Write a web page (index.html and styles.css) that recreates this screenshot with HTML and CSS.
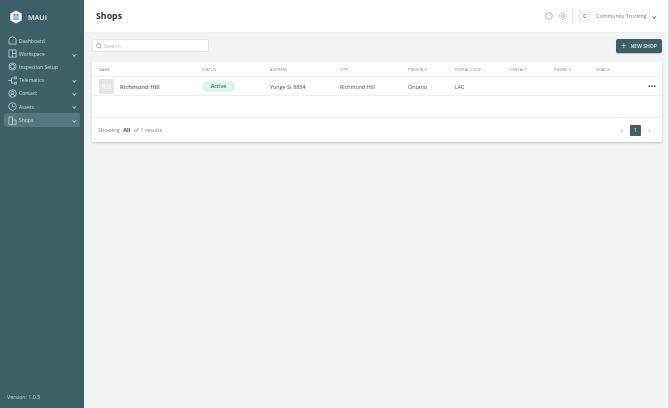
FILE: index.html
```html
<!DOCTYPE html>
<html lang="en">
<head>
<meta charset="utf-8">
<title>Shops</title>
<link rel="stylesheet" href="styles.css">
</head>
<body>
<div class="app">
  <aside class="sidebar">
    <div class="brand">
      <svg class="logo" viewBox="0 0 16 16"><path d="M8 .5 14.500 4v8L8 15.500 1.500 12V4z" fill="#f2f4f4"/><path d="M5 4.500h6v7H5z" fill="#8b9ea3"/><path d="M8 4.500v7M5 8h6" stroke="#f2f4f4" stroke-width=".7"/></svg>
      <span>MAUI</span>
    </div>
    <nav class="nav">
      <a class="nav-item"><svg viewBox="0 0 10 10"><path d="M1 9V4.500a4 3.500 0 0 1 8 0V9z"/></svg><span>Dashboard</span></a>
      <a class="nav-item"><svg viewBox="0 0 10 10"><path d="M1 1h8v8H1zM5 1v8M5 5h4"/></svg><span>Workspace</span><i class="chev"></i></a>
      <a class="nav-item"><svg viewBox="0 0 10 10"><circle cx="5" cy="5" r="4"/><circle cx="5" cy="5" r="2.400"/></svg><span>Inspection Setup</span></a>
      <a class="nav-item"><svg viewBox="0 0 10 10"><path d="M0 5h4M4 2v6M4 2h2M4 8h2M7 1h3v2H7zM7 7h3v2H7z"/></svg><span>Telematics</span><i class="chev"></i></a>
      <a class="nav-item"><svg viewBox="0 0 10 10"><circle cx="5" cy="5" r="4.200"/><circle cx="5" cy="4" r="1.500"/><path d="M2.500 8a2.500 2 0 0 1 5 0"/></svg><span>Contact</span><i class="chev"></i></a>
      <a class="nav-item"><svg viewBox="0 0 10 10"><circle cx="5" cy="5" r="4.200"/><path d="M5 2.500V5h2.200"/></svg><span>Assets</span><i class="chev"></i></a>
      <a class="nav-item active"><svg viewBox="0 0 10 10"><path d="M1 9.500V1h4v8.500M5 4.500h4v5H1"/></svg><span>Shops</span><i class="chev"></i></a>
    </nav>
    <div class="version">Version: 1.0.5</div>
  </aside>
  <div class="main">
    <header class="topbar">
      <h1>Shops</h1>
      <div class="top-actions">
        <svg class="top-icon" viewBox="0 0 10 10"><circle cx="5" cy="5" r="4.200"/><path d="M5 2.500V5.500"/></svg>
        <svg class="top-icon" viewBox="0 0 10 10"><circle cx="5" cy="5" r="4.200" stroke-dasharray="1.500 .6"/><circle cx="5" cy="5" r="1.800"/></svg>
        <div class="account">
          <span class="avatar">C</span>
          <span class="company">Community Trucking</span>
          <i class="chev dark"></i>
        </div>
      </div>
    </header>
    <div class="content">
      <div class="toolbar">
        <label class="search">
          <svg viewBox="0 0 10 10"><circle cx="4.600" cy="4.600" r="3.600"/><path d="M7.200 7.200 9 9"/></svg>
          <span>Search</span>
        </label>
        <button class="new-btn"><span class="plus">+</span>NEW SHOP</button>
      </div>
      <section class="card">
        <div class="row head">
          <span>NAME</span><span>STATUS</span><span>ADDRESS</span><span>CITY</span><span>PROVINCE</span><span>POSTAL CODE</span><span>CONTACT</span><span>PHONE #</span><span>EMAILS</span><span></span>
        </div>
        <div class="row body">
          <span class="name"><span class="thumb">RH</span><span>Richmond Hill</span></span>
          <span><span class="badge">Active</span></span>
          <span>Yonge St 8884</span>
          <span>Richmond Hill</span>
          <span>Ontario</span>
          <span>L4C</span>
          <span></span><span></span><span></span>
          <span class="dots">•••</span>
        </div>
        <div class="spacer"></div>
        <footer class="card-foot">
          <span class="showing">Showing <b>All</b> of 1 results</span>
          <div class="pager">
            <span class="arrow">‹</span>
            <span class="page">1</span>
            <span class="arrow">›</span>
          </div>
        </footer>
      </section>
    </div>
  </div>
</div>
</body>
</html>
```
FILE: styles.css
```css
* { box-sizing: border-box; }
html, body { margin: 0; height: 100%; overflow: hidden; }
body { font-family: "Open Sans", "Liberation Sans", sans-serif; color: #444c4f; }
.app { display: flex; height: 408px; width: 670px; filter: blur(.3px); }

.sidebar { width: 84px; flex: none; background: #3d6068; color: #d5dfe1; display: flex; flex-direction: column; padding: 10px 4px 7px; }
.brand { display: flex; align-items: center; gap: 5px; padding-left: 5px; height: 14px; font-size: 7.200px; font-weight: 600; color: #eef2f3; }
.logo { width: 14px; height: 14px; }
.nav { display: flex; flex-direction: column; margin-top: 10px; }
.nav-item { display: flex; align-items: center; height: 13.200px; padding: 0 4px; font-size: 5px; border-radius: 2px; gap: 2px; }
.nav-item svg { width: 9px; height: 9px; flex: none; fill: none; stroke: #d5dfe1; stroke-width: .8; }
.nav-item span { flex: 1; }
.nav-item.active { background: #537680; margin-top: .3px; }
.chev { width: 2.500px; height: 2.500px; border-right: 1px solid #b8c8cb; border-bottom: 1px solid #b8c8cb; transform: rotate(45deg); margin-right: 1px; flex: none; }
.chev.dark { border-color: #777; }
.version { margin-top: auto; padding-left: 3px; font-size: 5.300px; color: #c4d2d5; line-height: 8px; }

.main { flex: 1; display: flex; flex-direction: column; background: #f1f3f4; border-right: 2px solid #d8dcdd; min-width: 0; }
.topbar { height: 33px; flex: none; background: #fff; display: flex; justify-content: space-between; align-items: center; padding: 0 12px; border-bottom: 1px solid #eceeef; }
h1 { margin: 0; font-size: 8.800px; font-weight: 700; color: #2c2f30; }
.top-actions { display: flex; align-items: center; }
.top-icon { width: 8px; height: 8px; margin-right: 6px; fill: none; stroke: #777f82; stroke-width: .7; }
.account { display: flex; align-items: center; height: 16px; border-left: 1px solid #e6e9ea; padding-left: 5px; margin-left: -1px; }
.avatar { width: 13px; height: 13px; background: #f1f3f3; font-size: 5.500px; display: flex; align-items: center; justify-content: center; color: #666; margin-right: 5px; }
.company { font-size: 5.200px; color: #777f82; padding-right: 2px; border-right: 1px solid #e6e9ea; line-height: 14px; margin-right: 3px; }

.content { padding: 6px 6px 0 8px; }
.toolbar { display: flex; justify-content: space-between; align-items: center; height: 13px; }
.search { width: 117px; height: 13px; background: #fff; border: 1px solid #e4e7e8; border-radius: 2px; display: flex; align-items: center; gap: 2px; padding-left: 3px; font-size: 5.300px; color: #b5bbbd; }
.search svg { width: 6px; height: 6px; fill: none; stroke: #6f777a; stroke-width: 1; }
.new-btn { width: 46px; height: 14px; background: #3d6068; color: #e6edee; border: 0; border-radius: 2px; font: 600 5px "Open Sans", sans-serif; display: flex; align-items: center; justify-content: center; gap: 4px; padding: 0; box-shadow: 0 1px 1px rgba(0,0,0,.2); }
.plus { font-size: 9px; font-weight: 400; line-height: 8px; }

.card { margin-top: 10px; background: #fff; box-shadow: 0 1px 2px rgba(0,0,0,.22); border-radius: 1px; }
.row { display: grid; grid-template-columns: 103px 68px 70px 68px 47px 54px 45px 42px 1fr 14px; align-items: center; padding-left: 7px; border-bottom: 1px solid #eef0f0; }
.head { height: 15px; font-size: 3.800px; color: #80888b; letter-spacing: .1px; }
.body { height: 19px; padding-top: 1px; font-size: 5.400px; color: #4a5154; }
.name { display: flex; align-items: center; gap: 6px; font-size: 5.900px; font-weight: 600; color: #5a6063; }
.thumb { width: 15px; height: 15px; background: #e3e5e5; color: #fff; font-size: 7px; display: flex; align-items: center; justify-content: center; font-weight: 400; }
.badge { display: inline-block; width: 33px; height: 11px; line-height: 11px; text-align: center; border-radius: 5.500px; background: #dcf6ea; color: #2f7d5b; font-weight: 600; font-size: 5.300px; }
.dots { font-size: 6.500px; letter-spacing: .3px; color: #222; }
.spacer { height: 22px; border-bottom: 1px solid #eef0f0; }
.card-foot { height: 24px; display: flex; justify-content: space-between; align-items: center; padding: 0 9px 0 6px; }
.showing { font-size: 5.500px; color: #80878a; }
.showing b { color: #4a5154; margin: 0 2px; }
.pager { display: flex; align-items: center; gap: 5px; }
.page { width: 11px; height: 11px; background: #3d6068; color: #dfe7e8; font-size: 5.500px; display: flex; align-items: center; justify-content: center; border-radius: 1px; }
.arrow { font-size: 8px; color: #a0a7a9; width: 7px; text-align: center; line-height: 8px; }
```
